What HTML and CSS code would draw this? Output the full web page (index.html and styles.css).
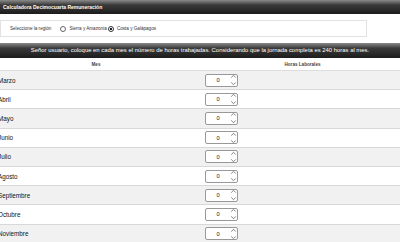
FILE: index.html
```html
<!DOCTYPE html>
<html lang="es">
<head>
  <meta charset="UTF-8">
  <meta name="viewport" content="width=device-width, initial-scale=1.0">
  <title>Calculadora Decimocuarta</title>
  <link rel="stylesheet" href="styles.css">
</head>
<body>

  <div class="titlebar">Calculadora Decimocuarta Remuneración</div>

  <div class="region">
    <span class="region-label">Seleccione la región</span>
    <label class="opt"><span class="radio"></span>Sierra y Amazonía</label>
    <label class="opt"><span class="radio checked"></span>Costa y Galápagos</label>
  </div>

  <div class="infobar">Señor usuario, coloque en cada mes el número de horas trabajadas. Considerando que la jornada completa es 240 horas al mes.</div>

  <table class="months">
    <colgroup><col class="c-mes"><col class="c-horas"></colgroup>
    <thead>
      <tr><th>Mes</th><th>Horas Laborales</th></tr>
    </thead>
    <tbody id="rows"></tbody>
  </table>

  <script>
    const meses = ["Marzo","Abril","Mayo","Junio","Julio","Agosto","Septiembre","Octubre","Noviembre"];
    const tbody = document.querySelector("#rows");
    const chev = '<svg class="spin" width="7" height="12" viewBox="0 0 7 12"><path d="M1.2 3.6 L3.5 1.3 L5.8 3.6" fill="none" stroke="#666" stroke-width="0.8"/><path d="M1.2 8.4 L3.5 10.7 L5.8 8.4" fill="none" stroke="#666" stroke-width="0.8"/></svg>';
    meses.forEach(m => {
      const tr = document.createElement("tr");
      tr.innerHTML = `<td class="mes">${m}</td><td><div class="num"><input type="text" value="0" readonly>${chev}</div></td>`;
      tbody.appendChild(tr);
    });
  </script>

</body>
</html>
```

FILE: styles.css
```css
body {
  margin: 0;
  font-family: "Liberation Sans", Arial, sans-serif;
  font-size: 6px;
  color: #222;
  background: #fff;
  overflow: hidden;
}

.titlebar {
  height: 14px;
  line-height: 14px;
  padding-left: 3px;
  color: #fff;
  font-size: 5px;
  font-weight: bold;
  background: linear-gradient(#8a8a8a, #3a3a3a 35%, #1c1c1c);
}

.region {
  display: flex;
  align-items: center;
  height: 15px;
  margin: 6px 33px 6px 0;
  padding-left: 9px;
  border: 1px solid #e2e2e2;
  font-size: 4.6px;
  color: #333;
}

.region-label {
  margin-right: 9px;
}

.opt {
  display: flex;
  align-items: center;
  margin-right: 1px;
}

.radio {
  width: 4px;
  height: 4px;
  border: 0.7px solid #666;
  border-radius: 50%;
  margin-right: 3px;
  box-sizing: content-box;
  background: #fff;
}

.radio.checked {
  background: radial-gradient(#222 45%, #fff 55%);
  border-color: #333;
}

.infobar {
  height: 15px;
  line-height: 15px;
  text-align: center;
  color: #fff;
  font-size: 5.9px;
  background: linear-gradient(#8a8a8a, #3a3a3a 35%, #1c1c1c);
}

.months {
  width: 413px;
  margin-left: -8px;
  border-collapse: collapse;
  table-layout: fixed;
}

.c-mes { width: 208px; }
.c-horas { width: 205px; }

.months th {
  height: 12px;
  font-size: 4.6px;
  font-weight: bold;
  color: #444;
  border-bottom: 1px solid #ddd;
  padding: 0;
}

.months td {
  height: 18.2px;
  padding: 0;
  border-bottom: 1px solid #d8d8d8;
}

.months tbody tr:nth-child(odd) {
  background: #f1f1f1;
}

.mes {
  padding-left: 6px !important;
  font-size: 6.3px;
  color: #111;
}

.num {
  display: flex;
  align-items: center;
  width: 31px;
  height: 11px;
  margin-left: 5px;
  border: 1px solid #999;
  border-radius: 2px;
  background: #fff;
}

.num input {
  width: 24px;
  border: 0;
  padding: 0;
  font-family: inherit;
  font-size: 5.8px;
  text-align: center;
  background: transparent;
  color: #222;
  outline: none;
}

.spin {
  display: block;
  margin-left: 0;
}
```
